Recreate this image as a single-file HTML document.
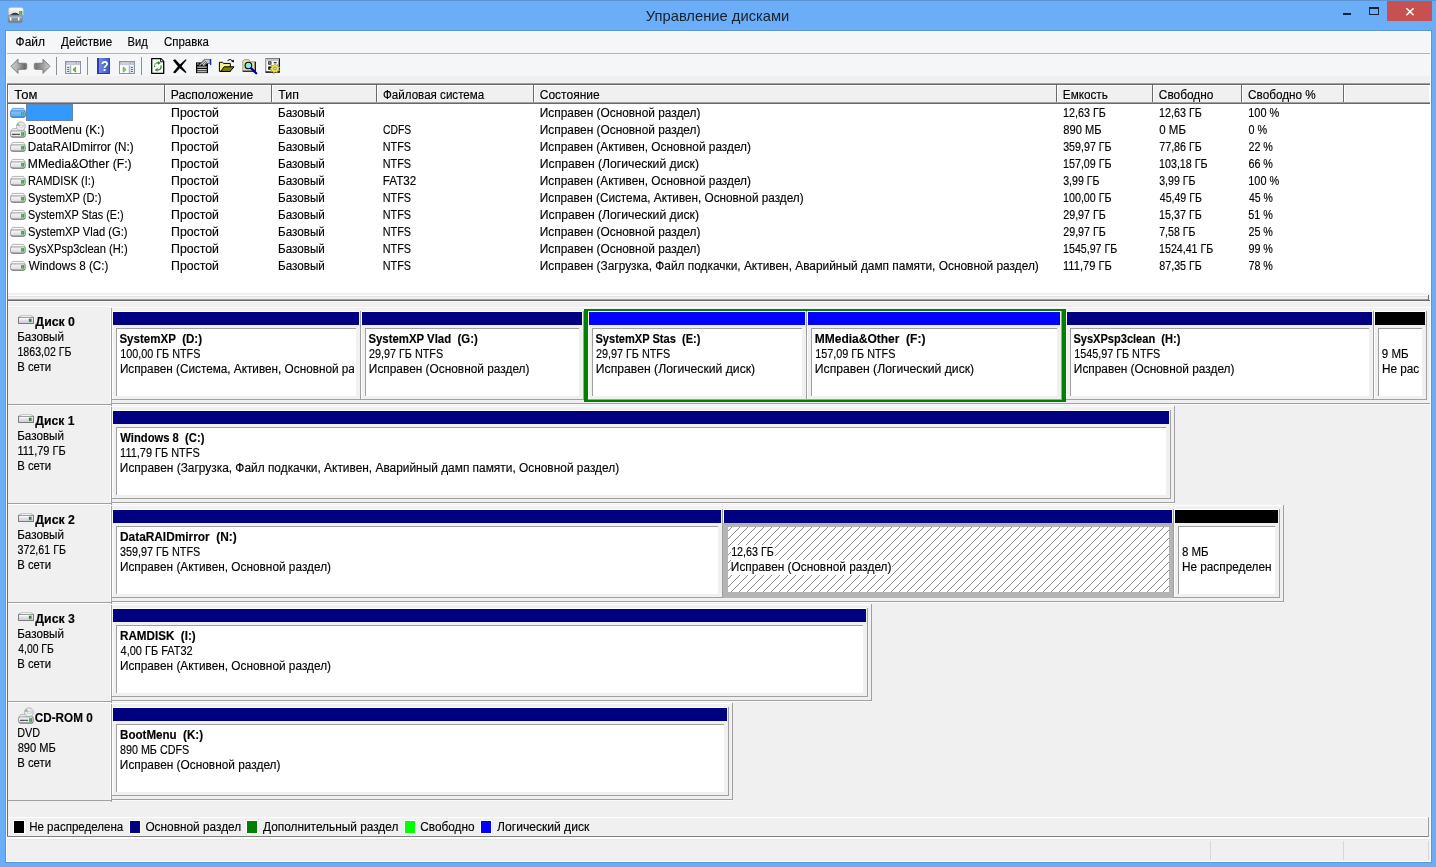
<!DOCTYPE html>
<html><head><meta charset="utf-8"><title>Управление дисками</title>
<style>
html,body{margin:0;padding:0;}
body{width:1436px;height:867px;position:relative;overflow:hidden;background:#6BADF6;font-family:"Liberation Sans",sans-serif;}
#w{will-change:transform;position:absolute;left:0;top:0;width:1436px;height:867px;overflow:hidden;}
#w div,#w svg,#w span.t{position:absolute;}
#w div.c{overflow:hidden;}
span.t{-webkit-text-stroke:0.14px #000;white-space:pre;transform-origin:0 0;display:block;}
</style></head><body><div id="w">
<div style="left:0px;top:0px;width:1436px;height:867px;background:#6BADF6;"></div>
<div style="left:0px;top:0px;width:1436px;height:1px;background:#5A93D2;"></div>
<div style="left:6px;top:30px;width:1425px;height:1px;background:#5E9BE0;"></div>
<div style="left:6px;top:31px;width:1425px;height:831px;background:#F0F0F0;"></div>
<div style="left:1387px;top:1px;width:45px;height:20px;background:#C75050;"></div>
<svg style="left:1405px;top:7px" width="10" height="9" viewBox="0 0 10 9"><path d="M1.4 1.2 L8.6 8.2 M8.6 1.2 L1.4 8.2" stroke="#fff" stroke-width="1.6" fill="none"/></svg>
<div style="left:1369px;top:7px;width:8px;height:5px;border:1px solid #10233f;border-top-width:2px"></div>
<div style="left:1343px;top:13px;width:8px;height:2px;background:#10233f;"></div>
<svg style="left:7px;top:6px" width="18" height="18" viewBox="7 6 18 18">
<defs><linearGradient id="ti1" x1="0" y1="0" x2="0" y2="1"><stop offset="0" stop-color="#ffffff"/><stop offset="1" stop-color="#d4d6da"/></linearGradient>
<linearGradient id="ti2" x1="0" y1="0" x2="0" y2="1"><stop offset="0" stop-color="#a9b6bf"/><stop offset="0.5" stop-color="#8796a1"/><stop offset="1" stop-color="#6f7f8b"/></linearGradient></defs>
<path d="M10 7.4 L21.6 7.4 L23.4 9 L23.4 15 L8.4 15 L8.4 9 Z" fill="url(#ti1)" stroke="#b4b8be" stroke-width="0.7"/>
<rect x="19.3" y="11" width="2.9" height="3.6" fill="#2f9a2f"/><rect x="20.5" y="11" width="0.7" height="3.6" fill="#8fd98f"/>
<path d="M10.8 15.2 Q15 11.2 19.2 15.2 Z" fill="#4a4a4a" stroke="#1c1c1c" stroke-width="0.9"/>
<rect x="8.3" y="15.2" width="13.8" height="7.4" rx="0.8" fill="url(#ti2)" stroke="#74838e" stroke-width="0.6"/>
<rect x="8.6" y="17" width="13.2" height="1" fill="#b9c4cb" opacity="0.7"/>
<rect x="9.9" y="17.6" width="1.5" height="2.9" fill="#fff"/><rect x="17.9" y="17.6" width="1.5" height="2.9" fill="#fff"/>
</svg>
<div style="left:6px;top:31px;width:1425px;height:22px;background:#F5F6F7;"></div>
<div style="left:6px;top:53px;width:1425px;height:1px;background:#B4B4B4;"></div>
<div style="left:6px;top:54px;width:1425px;height:22px;background:#F5F6F7;"></div>

<svg style="left:6px;top:54px" width="290" height="24" viewBox="6 54 290 24">
<defs>
<linearGradient id="gaL" x1="0" y1="0" x2="1" y2="0"><stop offset="0" stop-color="#cdcdcd"/><stop offset="0.4" stop-color="#b4b4b4"/><stop offset="0.88" stop-color="#686868"/><stop offset="1" stop-color="#8a8a8a"/></linearGradient>
<linearGradient id="gaR" x1="1" y1="0" x2="0" y2="0"><stop offset="0" stop-color="#cdcdcd"/><stop offset="0.4" stop-color="#a6a6a6"/><stop offset="0.88" stop-color="#747474"/><stop offset="1" stop-color="#8a8a8a"/></linearGradient>
<linearGradient id="gh" x1="0" y1="0" x2="1" y2="0"><stop offset="0" stop-color="#2a3f9f"/><stop offset="0.18" stop-color="#2a3f9f"/><stop offset="0.19" stop-color="#6f89e4"/><stop offset="0.55" stop-color="#5572d6"/><stop offset="1" stop-color="#3853b8"/></linearGradient>
</defs>
<path d="M11 66.3 L18 59.2 L18 63.3 L25.6 63.3 Q26.7 63.3 26.7 64.4 L26.7 68.2 Q26.7 69.3 25.6 69.3 L18 69.3 L18 73.4 Z" fill="url(#gaL)" stroke="#7c7c7c" stroke-width="1" stroke-linejoin="round"/>
<path d="M50 66.3 L43 59.2 L43 63.3 L35.4 63.3 Q34.3 63.3 34.3 64.4 L34.3 68.2 Q34.3 69.3 35.4 69.3 L43 69.3 L43 73.4 Z" fill="url(#gaR)" stroke="#7c7c7c" stroke-width="1" stroke-linejoin="round"/>
<rect x="56" y="57" width="1" height="18" fill="#8e9096"/>
<rect x="87" y="57" width="1" height="18" fill="#8e9096"/>
<rect x="141" y="57" width="1" height="18" fill="#8e9096"/>
<!-- console tree icon -->
<g>
<rect x="65.5" y="61.5" width="15" height="12" fill="#ffffff" stroke="#8a93a3"/>
<rect x="66" y="62" width="14" height="3" fill="#aab2c0"/>
<rect x="66.6" y="62.6" width="9" height="0.9" fill="#eef1f6"/><rect x="77" y="62.5" width="1" height="1.1" fill="#eef1f6"/><rect x="78.7" y="62.5" width="1" height="1.1" fill="#eef1f6"/>
<rect x="66" y="64.6" width="14" height="0.9" fill="#e9edf3"/>
<rect x="66" y="65.5" width="4.5" height="7.5" fill="#e4e8ef"/>
<rect x="70.2" y="65.5" width="1" height="7.5" fill="#97a0b0"/>
<rect x="67.2" y="67" width="2" height="1" fill="#5f6978"/><rect x="67.2" y="69" width="2" height="1" fill="#5f6978"/><rect x="67.2" y="71" width="2" height="1" fill="#5f6978"/>
<path d="M75.7 67 L72.8 69.6 L75.7 72.2 Z" fill="#6fc24a" stroke="#3f9a24" stroke-width="0.7"/>
</g>
<!-- help -->
<rect x="97" y="58" width="13" height="16" fill="url(#gh)"/>
<rect x="97" y="73" width="13" height="1" fill="#27399a"/><rect x="109.2" y="58" width="0.8" height="16" fill="#2e45a8"/>
<text x="104.9" y="71.4" font-family="Liberation Sans, sans-serif" font-weight="bold" font-size="14.5" fill="#fff" text-anchor="middle" transform="translate(104.9 0) scale(0.86 1) translate(-104.9 0)">?</text>
<!-- action pane icon -->
<g>
<rect x="119.5" y="61.5" width="15" height="12" fill="#ffffff" stroke="#8a93a3"/>
<rect x="120" y="62" width="14" height="3" fill="#aab2c0"/>
<rect x="120.6" y="62.6" width="9" height="0.9" fill="#eef1f6"/><rect x="131" y="62.5" width="1" height="1.1" fill="#eef1f6"/><rect x="132.7" y="62.5" width="1" height="1.1" fill="#eef1f6"/>
<rect x="120" y="64.6" width="14" height="0.9" fill="#e9edf3"/>
<rect x="129.5" y="65.5" width="4.5" height="7.5" fill="#e4e8ef"/>
<rect x="128.8" y="65.5" width="1" height="7.5" fill="#97a0b0"/>
<rect x="130.9" y="67" width="2" height="1" fill="#5f6978"/><rect x="130.9" y="69" width="2" height="1" fill="#5f6978"/><rect x="130.9" y="71" width="2" height="1" fill="#5f6978"/>
<path d="M123.2 67 L126.1 69.6 L123.2 72.2 Z" fill="#9ad67c" stroke="#4aa52c" stroke-width="0.8"/>
</g>
<!-- refresh doc -->
<path d="M151.7 58.7 L161 58.7 L163.7 61.4 L163.7 73.3 L151.7 73.3 Z" fill="#fff" stroke="#000" stroke-width="1.3" stroke-linejoin="round"/>
<path d="M160.6 59 L160.6 61.8 L163.4 61.8" fill="#fff" stroke="#000" stroke-width="0.9"/>
<path d="M154.6 67.2 Q153.9 62.9 158 62.9" fill="none" stroke="#1a8a1a" stroke-width="1.2" stroke-dasharray="1.6 0.8"/>
<path d="M158 61 L160.8 62.9 L158 64.8 Z" fill="#1a8a1a"/>
<path d="M161 65.5 Q161.6 69.9 157.6 69.9" fill="none" stroke="#1a8a1a" stroke-width="1.2"/>
<path d="M157.6 68 L154.8 69.9 L157.6 71.8 Z" fill="#1a8a1a"/>
<!-- X -->
<path d="M173 72.6 L175.3 73.2 L180.8 67 L186.6 59.9 L185.7 59.2 L178.2 66 Z" fill="#000"/>
<path d="M172.9 60.3 L175.2 59.3 L181 65.6 L186.5 72.2 L185.5 73 L178.6 67.2 Z" fill="#000"/>
<!-- properties -->
<rect x="196" y="62.4" width="12" height="10.7" fill="#000"/>
<rect x="197.2" y="63.4" width="1.3" height="1.2" fill="#fff"/>
<rect x="197.2" y="66.5" width="9.6" height="1.3" fill="#c8c8c8"/><rect x="197.2" y="69.2" width="9.6" height="1.1" fill="#fff"/><rect x="197.2" y="71.3" width="9.6" height="1" fill="#fff"/>
<path d="M198.8 65.2 L204.2 59.4 L210 59.4 L210 63.6 L206.6 63.6 L204 66.4 L201.5 64.2 L200 66 Z" fill="#c9c9c9" stroke="#3a3a3a" stroke-width="0.6"/>
<path d="M200.6 64 L204.6 60 M202 65 L206 61 M203.6 65.6 L207 62" stroke="#333" stroke-width="0.6"/>
<rect x="210" y="59" width="1.3" height="6" fill="#1a2fb0"/>
<!-- folder -->
<path d="M219.4 62.3 L222.6 62.3 L223.4 63.4 L230.3 63.4 L230.3 71.4 L219.4 71.4 Z" fill="#f1f08a" stroke="#000" stroke-width="1"/>
<path d="M220.6 71.4 L224.2 66.8 L234 66.8 L230.2 71.4 Z" fill="#808000" stroke="#000" stroke-width="1" stroke-linejoin="round"/>
<path d="M227.5 60.6 Q230.3 57.9 232.8 61.2" fill="none" stroke="#000" stroke-width="1"/><path d="M231.2 61.6 L233.9 62.6 L233.7 59.6 Z" fill="#000"/>
<!-- search -->
<path d="M242.8 71 L242.8 61 L244.2 59.6 L249 59.6 L250.2 61.8 L255.2 61.8 L255.2 71 Z" fill="#e9dea0" stroke="#a0a0a0" stroke-width="1"/>
<path d="M255.3 61.8 L255.3 71.2 L242.6 71.2" fill="none" stroke="#000" stroke-width="1.1"/>
<circle cx="248.4" cy="65.5" r="3.3" fill="#84e9ea" stroke="#000" stroke-width="1.1"/>
<path d="M251.2 68.4 L256.2 73.3" stroke="#00008c" stroke-width="2.2" stroke-linecap="round"/>
<!-- settings -->
<rect x="265.8" y="58.5" width="13.4" height="13.4" fill="#fff" stroke="#808080"/>
<path d="M279.3 58.5 L279.3 72.1 L265.5 72.1" fill="none" stroke="#000" stroke-width="1.1"/>
<rect x="266.3" y="59" width="12.4" height="2.1" fill="#c4c4c4"/>
<rect x="268.2" y="61.4" width="3.2" height="3.2" fill="#000"/><path d="M268.9 62 L270.7 64 M270.7 62 L268.9 64" stroke="#fff" stroke-width="0.5"/><rect x="273.8" y="62.2" width="2.8" height="1" fill="#000"/>
<rect x="268.2" y="66.5" width="3.2" height="3.2" fill="#000"/>
<path d="M274.9 63.6 L276 65.4 L278 64.5 L277.8 66.7 L280 67.2 L278.5 68.8 L279.8 70.6 L277.6 70.7 L277.3 72.9 L275.4 71.8 L273.9 73.6 L273 71.5 L270.8 72 L271.5 69.9 L269.6 68.6 L271.6 67.6 L271 65.4 L273.2 65.7 Z" fill="#f0ea5a" stroke="#7a7420" stroke-width="0.55"/>
<circle cx="274.9" cy="68.4" r="1.5" fill="#d8d8d8" stroke="#6f6a10" stroke-width="0.6"/>
</svg>
<div style="left:7px;top:83px;width:1px;height:754px;background:#696969;"></div>
<div style="left:7px;top:83px;width:1423px;height:1px;background:#A0A0A0;"></div>
<div style="left:7px;top:84px;width:1423px;height:1px;background:#696969;"></div>
<div style="left:8px;top:85px;width:1422px;height:209px;background:#fff;"></div>
<div style="left:8px;top:85px;width:1421px;height:18px;background:#F0F0F0;"></div>
<div style="left:8px;top:85px;width:1422px;height:1px;background:#FFFFFF;"></div>
<div style="left:8px;top:85px;width:1px;height:17px;background:#FFFFFF;"></div>
<div style="left:164px;top:85px;width:1px;height:18px;background:#696969;"></div>
<div style="left:165px;top:85px;width:1px;height:17px;background:#FFFFFF;"></div>
<div style="left:271px;top:85px;width:1px;height:18px;background:#696969;"></div>
<div style="left:272px;top:85px;width:1px;height:17px;background:#FFFFFF;"></div>
<div style="left:376px;top:85px;width:1px;height:18px;background:#696969;"></div>
<div style="left:377px;top:85px;width:1px;height:17px;background:#FFFFFF;"></div>
<div style="left:533px;top:85px;width:1px;height:18px;background:#696969;"></div>
<div style="left:534px;top:85px;width:1px;height:17px;background:#FFFFFF;"></div>
<div style="left:1056px;top:85px;width:1px;height:18px;background:#696969;"></div>
<div style="left:1057px;top:85px;width:1px;height:17px;background:#FFFFFF;"></div>
<div style="left:1152px;top:85px;width:1px;height:18px;background:#696969;"></div>
<div style="left:1153px;top:85px;width:1px;height:17px;background:#FFFFFF;"></div>
<div style="left:1241px;top:85px;width:1px;height:18px;background:#696969;"></div>
<div style="left:1242px;top:85px;width:1px;height:17px;background:#FFFFFF;"></div>
<div style="left:1343px;top:85px;width:1px;height:18px;background:#696969;"></div>
<div style="left:1344px;top:85px;width:1px;height:17px;background:#FFFFFF;"></div>
<div style="left:8px;top:102px;width:1422px;height:1px;background:#A0A0A0;"></div>
<div style="left:8px;top:103px;width:1422px;height:1px;background:#696969;"></div>
<div style="left:26px;top:104px;width:47px;height:17px;background:#3399FF;outline:1px dotted #5f80ad;outline-offset:-1px;"></div>
<svg style="left:9px;top:107px" width="18" height="12" viewBox="-1 -1 18 12"><defs><linearGradient id="dg39" x1="0" y1="0" x2="0" y2="1"><stop offset="0" stop-color="#8cc3fb"/><stop offset="1" stop-color="#5ea6f3"/></linearGradient></defs><path d="M2.6 0.4 L13.4 0.4 L15.4 3.4 L0.6 3.4 Z" fill="#a6d2fd" stroke="#3c84d6" stroke-width="0.7" stroke-linejoin="round"/><rect x="0.45" y="2.9" width="15.1" height="6.3" rx="1.9" fill="url(#dg39)" stroke="#3c84d6" stroke-width="0.9"/><path d="M1.2 8 Q1.6 9.2 3 9.2 L13 9.2 Q14.4 9.2 14.8 8" fill="none" stroke="#2f74c4" stroke-width="0.9"/><rect x="11.2" y="4" width="3.2" height="3.6" fill="#3d9fa0"/><rect x="12.5" y="4" width="0.7" height="3.6" fill="#7fd0c0"/></svg>
<svg style="left:9px;top:121px" width="18" height="17" viewBox="-1 0 18 17"><defs><linearGradient id="dg40" x1="0" y1="0" x2="0" y2="1"><stop offset="0" stop-color="#f6f6f8"/><stop offset="1" stop-color="#dad8e1"/></linearGradient></defs><path d="M2.6 7.7 L13.4 7.7 L15.4 10.4 L0.6 10.4 Z" fill="#fafafa" stroke="#949494" stroke-width="0.7" stroke-linejoin="round"/><circle cx="10.9" cy="5.4" r="4.5" fill="#eceaf1" stroke="#a9a7b2" stroke-width="0.8"/><path d="M10.9 5.4 L6.5 4.4 A4.5 4.5 0 0 1 8.3 1.8 Z" fill="#7fd069"/><path d="M10.9 5.4 L14.6 2.9 A4.5 4.5 0 0 1 15.3 6.4 Z" fill="#d9cfe6"/><circle cx="10.9" cy="5.4" r="1.3" fill="#fff" stroke="#b4b2bd" stroke-width="0.6"/><rect x="0.45" y="9.9" width="15.1" height="6.2" rx="1.9" fill="url(#dg40)" stroke="#949494" stroke-width="0.9"/><path d="M1.2 15 Q1.6 16.1 3 16.1 L13 16.1 Q14.4 16.1 14.8 15" fill="none" stroke="#727272" stroke-width="0.9"/><rect x="1.9" y="12.8" width="8" height="1.1" fill="#444"/><rect x="6.6" y="13.9" width="1.3" height="0.8" fill="#fff"/><rect x="11.2" y="11.2" width="3.2" height="3.5" fill="#2f962f"/><rect x="12.5" y="11.2" width="0.7" height="3.5" fill="#86d886"/></svg>
<svg style="left:9px;top:141px" width="18" height="12" viewBox="-1 -1 18 12"><defs><linearGradient id="dg41" x1="0" y1="0" x2="0" y2="1"><stop offset="0" stop-color="#f6f6f8"/><stop offset="1" stop-color="#dad8e1"/></linearGradient></defs><path d="M2.6 0.4 L13.4 0.4 L15.4 3.4 L0.6 3.4 Z" fill="#fafafa" stroke="#949494" stroke-width="0.7" stroke-linejoin="round"/><rect x="0.45" y="2.9" width="15.1" height="6.3" rx="1.9" fill="url(#dg41)" stroke="#949494" stroke-width="0.9"/><path d="M1.2 8 Q1.6 9.2 3 9.2 L13 9.2 Q14.4 9.2 14.8 8" fill="none" stroke="#727272" stroke-width="0.9"/><rect x="11.2" y="4" width="3.2" height="3.6" fill="#2f962f"/><rect x="12.5" y="4" width="0.7" height="3.6" fill="#86d886"/></svg>
<svg style="left:9px;top:158px" width="18" height="12" viewBox="-1 -1 18 12"><defs><linearGradient id="dg42" x1="0" y1="0" x2="0" y2="1"><stop offset="0" stop-color="#f6f6f8"/><stop offset="1" stop-color="#dad8e1"/></linearGradient></defs><path d="M2.6 0.4 L13.4 0.4 L15.4 3.4 L0.6 3.4 Z" fill="#fafafa" stroke="#949494" stroke-width="0.7" stroke-linejoin="round"/><rect x="0.45" y="2.9" width="15.1" height="6.3" rx="1.9" fill="url(#dg42)" stroke="#949494" stroke-width="0.9"/><path d="M1.2 8 Q1.6 9.2 3 9.2 L13 9.2 Q14.4 9.2 14.8 8" fill="none" stroke="#727272" stroke-width="0.9"/><rect x="11.2" y="4" width="3.2" height="3.6" fill="#2f962f"/><rect x="12.5" y="4" width="0.7" height="3.6" fill="#86d886"/></svg>
<svg style="left:9px;top:175px" width="18" height="12" viewBox="-1 -1 18 12"><defs><linearGradient id="dg43" x1="0" y1="0" x2="0" y2="1"><stop offset="0" stop-color="#f6f6f8"/><stop offset="1" stop-color="#dad8e1"/></linearGradient></defs><path d="M2.6 0.4 L13.4 0.4 L15.4 3.4 L0.6 3.4 Z" fill="#fafafa" stroke="#949494" stroke-width="0.7" stroke-linejoin="round"/><rect x="0.45" y="2.9" width="15.1" height="6.3" rx="1.9" fill="url(#dg43)" stroke="#949494" stroke-width="0.9"/><path d="M1.2 8 Q1.6 9.2 3 9.2 L13 9.2 Q14.4 9.2 14.8 8" fill="none" stroke="#727272" stroke-width="0.9"/><rect x="11.2" y="4" width="3.2" height="3.6" fill="#2f962f"/><rect x="12.5" y="4" width="0.7" height="3.6" fill="#86d886"/></svg>
<svg style="left:9px;top:192px" width="18" height="12" viewBox="-1 -1 18 12"><defs><linearGradient id="dg44" x1="0" y1="0" x2="0" y2="1"><stop offset="0" stop-color="#f6f6f8"/><stop offset="1" stop-color="#dad8e1"/></linearGradient></defs><path d="M2.6 0.4 L13.4 0.4 L15.4 3.4 L0.6 3.4 Z" fill="#fafafa" stroke="#949494" stroke-width="0.7" stroke-linejoin="round"/><rect x="0.45" y="2.9" width="15.1" height="6.3" rx="1.9" fill="url(#dg44)" stroke="#949494" stroke-width="0.9"/><path d="M1.2 8 Q1.6 9.2 3 9.2 L13 9.2 Q14.4 9.2 14.8 8" fill="none" stroke="#727272" stroke-width="0.9"/><rect x="11.2" y="4" width="3.2" height="3.6" fill="#2f962f"/><rect x="12.5" y="4" width="0.7" height="3.6" fill="#86d886"/></svg>
<svg style="left:9px;top:209px" width="18" height="12" viewBox="-1 -1 18 12"><defs><linearGradient id="dg45" x1="0" y1="0" x2="0" y2="1"><stop offset="0" stop-color="#f6f6f8"/><stop offset="1" stop-color="#dad8e1"/></linearGradient></defs><path d="M2.6 0.4 L13.4 0.4 L15.4 3.4 L0.6 3.4 Z" fill="#fafafa" stroke="#949494" stroke-width="0.7" stroke-linejoin="round"/><rect x="0.45" y="2.9" width="15.1" height="6.3" rx="1.9" fill="url(#dg45)" stroke="#949494" stroke-width="0.9"/><path d="M1.2 8 Q1.6 9.2 3 9.2 L13 9.2 Q14.4 9.2 14.8 8" fill="none" stroke="#727272" stroke-width="0.9"/><rect x="11.2" y="4" width="3.2" height="3.6" fill="#2f962f"/><rect x="12.5" y="4" width="0.7" height="3.6" fill="#86d886"/></svg>
<svg style="left:9px;top:226px" width="18" height="12" viewBox="-1 -1 18 12"><defs><linearGradient id="dg46" x1="0" y1="0" x2="0" y2="1"><stop offset="0" stop-color="#f6f6f8"/><stop offset="1" stop-color="#dad8e1"/></linearGradient></defs><path d="M2.6 0.4 L13.4 0.4 L15.4 3.4 L0.6 3.4 Z" fill="#fafafa" stroke="#949494" stroke-width="0.7" stroke-linejoin="round"/><rect x="0.45" y="2.9" width="15.1" height="6.3" rx="1.9" fill="url(#dg46)" stroke="#949494" stroke-width="0.9"/><path d="M1.2 8 Q1.6 9.2 3 9.2 L13 9.2 Q14.4 9.2 14.8 8" fill="none" stroke="#727272" stroke-width="0.9"/><rect x="11.2" y="4" width="3.2" height="3.6" fill="#2f962f"/><rect x="12.5" y="4" width="0.7" height="3.6" fill="#86d886"/></svg>
<svg style="left:9px;top:243px" width="18" height="12" viewBox="-1 -1 18 12"><defs><linearGradient id="dg47" x1="0" y1="0" x2="0" y2="1"><stop offset="0" stop-color="#f6f6f8"/><stop offset="1" stop-color="#dad8e1"/></linearGradient></defs><path d="M2.6 0.4 L13.4 0.4 L15.4 3.4 L0.6 3.4 Z" fill="#fafafa" stroke="#949494" stroke-width="0.7" stroke-linejoin="round"/><rect x="0.45" y="2.9" width="15.1" height="6.3" rx="1.9" fill="url(#dg47)" stroke="#949494" stroke-width="0.9"/><path d="M1.2 8 Q1.6 9.2 3 9.2 L13 9.2 Q14.4 9.2 14.8 8" fill="none" stroke="#727272" stroke-width="0.9"/><rect x="11.2" y="4" width="3.2" height="3.6" fill="#2f962f"/><rect x="12.5" y="4" width="0.7" height="3.6" fill="#86d886"/></svg>
<svg style="left:9px;top:260px" width="18" height="12" viewBox="-1 -1 18 12"><defs><linearGradient id="dg48" x1="0" y1="0" x2="0" y2="1"><stop offset="0" stop-color="#f6f6f8"/><stop offset="1" stop-color="#dad8e1"/></linearGradient></defs><path d="M2.6 0.4 L13.4 0.4 L15.4 3.4 L0.6 3.4 Z" fill="#fafafa" stroke="#949494" stroke-width="0.7" stroke-linejoin="round"/><rect x="0.45" y="2.9" width="15.1" height="6.3" rx="1.9" fill="url(#dg48)" stroke="#949494" stroke-width="0.9"/><path d="M1.2 8 Q1.6 9.2 3 9.2 L13 9.2 Q14.4 9.2 14.8 8" fill="none" stroke="#727272" stroke-width="0.9"/><rect x="11.2" y="4" width="3.2" height="3.6" fill="#2f962f"/><rect x="12.5" y="4" width="0.7" height="3.6" fill="#86d886"/></svg>
<div style="left:8px;top:293px;width:1422px;height:6px;background:#F0F0F0;"></div>
<div style="left:8px;top:295px;width:1421px;height:1px;background:#FFFFFF;"></div>
<div style="left:8px;top:296px;width:1421px;height:1px;background:#E3E3E3;"></div>
<div style="left:8px;top:299px;width:1421px;height:1px;background:#A0A0A0;"></div>
<div style="left:8px;top:300px;width:1422px;height:1px;background:#696969;"></div>
<div style="left:1428px;top:295px;width:1px;height:6px;background:#696969;"></div>
<div style="left:8px;top:301px;width:1422px;height:1px;background:#F8F8F8;"></div>
<div style="left:8px;top:306px;width:103px;height:1px;background:#FFFFFF;"></div>
<div style="left:112px;top:307px;width:1318px;height:1px;background:#FFFFFF;"></div>
<div style="left:110px;top:306px;width:1px;height:97px;background:#FFFFFF;"></div>
<div style="left:111px;top:308px;width:1px;height:98px;background:#A0A0A0;"></div>
<div style="left:112px;top:399px;width:1315px;height:1px;background:#A0A0A0;"></div>
<div style="left:8px;top:404px;width:103px;height:1px;background:#A0A0A0;"></div>
<div style="left:111px;top:403px;width:1319px;height:1px;background:#A0A0A0;"></div>
<div style="left:112px;top:404px;width:1318px;height:1px;background:#FAFAFA;"></div>
<svg style="left:18px;top:315px" width="17" height="10" viewBox="0 0 17 10"><defs><linearGradient id="pg64" x1="0" y1="0" x2="0" y2="1"><stop offset="0" stop-color="#f6f5fa"/><stop offset="1" stop-color="#cdc8db"/></linearGradient></defs><path d="M3.4 0.35 L12.8 0.35 L15.4 2.2 L0.5 2.2 Z" fill="#f3f3f3" stroke="#a6a6a6" stroke-width="0.7"/><rect x="4" y="0.9" width="8.6" height="0.6" fill="#fff"/><rect x="0.55" y="2.55" width="15" height="5.9" fill="url(#pg64)" stroke="#707070" stroke-width="0.9"/><rect x="1" y="2.1" width="14.1" height="0.9" fill="#a2a2a2"/><rect x="2.4" y="3.3" width="8.2" height="0.8" fill="#fff"/><rect x="10.9" y="3.8" width="2.9" height="3.1" fill="#2f6f2f"/><rect x="11.9" y="3.8" width="0.5" height="3.1" fill="#62a853"/><rect x="13.4" y="3.8" width="0.6" height="3.3" fill="#9ad08a"/><rect x="10.9" y="6.8" width="3" height="0.5" fill="#9ad08a"/></svg>
<div style="left:112px;top:311px;width:1px;height:88px;background:#FFFFFF;"></div>
<div style="left:113px;top:311px;width:246px;height:1px;background:#FFFFFF;"></div>
<div style="left:113px;top:312px;width:246px;height:13px;background:#000080;"></div>
<div style="left:116px;top:328px;width:240px;height:68px;background:#fff;border-left:1px solid #A0A0A0;border-top:1px solid #A0A0A0;box-sizing:border-box;"></div>
<div style="left:360px;top:311px;width:1px;height:89px;background:#A0A0A0;"></div>
<div style="left:360px;top:311px;width:1px;height:89px;background:#A0A0A0;"></div>
<div style="left:361px;top:311px;width:1px;height:88px;background:#FFFFFF;"></div>
<div style="left:362px;top:311px;width:220px;height:1px;background:#FFFFFF;"></div>
<div style="left:362px;top:312px;width:220px;height:13px;background:#000080;"></div>
<div style="left:365px;top:328px;width:214px;height:68px;background:#fff;border-left:1px solid #A0A0A0;border-top:1px solid #A0A0A0;box-sizing:border-box;"></div>
<div style="left:583px;top:311px;width:1px;height:89px;background:#A0A0A0;"></div>
<div style="left:587px;top:311px;width:1px;height:89px;background:#A0A0A0;"></div>
<div style="left:588px;top:311px;width:1px;height:88px;background:#FFFFFF;"></div>
<div style="left:589px;top:311px;width:216px;height:1px;background:#FFFFFF;"></div>
<div style="left:589px;top:312px;width:216px;height:13px;background:#0000FF;"></div>
<div style="left:592px;top:328px;width:210px;height:68px;background:#fff;border-left:1px solid #A0A0A0;border-top:1px solid #A0A0A0;box-sizing:border-box;"></div>
<div style="left:806px;top:311px;width:1px;height:89px;background:#A0A0A0;"></div>
<div style="left:806px;top:311px;width:1px;height:89px;background:#A0A0A0;"></div>
<div style="left:807px;top:311px;width:1px;height:88px;background:#FFFFFF;"></div>
<div style="left:808px;top:311px;width:252px;height:1px;background:#FFFFFF;"></div>
<div style="left:808px;top:312px;width:252px;height:13px;background:#0000FF;"></div>
<div style="left:811px;top:328px;width:246px;height:68px;background:#fff;border-left:1px solid #A0A0A0;border-top:1px solid #A0A0A0;box-sizing:border-box;"></div>
<div style="left:1061px;top:311px;width:1px;height:89px;background:#A0A0A0;"></div>
<div style="left:1065px;top:311px;width:1px;height:89px;background:#A0A0A0;"></div>
<div style="left:1066px;top:311px;width:1px;height:88px;background:#FFFFFF;"></div>
<div style="left:1067px;top:311px;width:305px;height:1px;background:#FFFFFF;"></div>
<div style="left:1067px;top:312px;width:305px;height:13px;background:#000080;"></div>
<div style="left:1070px;top:328px;width:299px;height:68px;background:#fff;border-left:1px solid #A0A0A0;border-top:1px solid #A0A0A0;box-sizing:border-box;"></div>
<div style="left:1373px;top:311px;width:1px;height:89px;background:#A0A0A0;"></div>
<div style="left:1373px;top:311px;width:1px;height:89px;background:#A0A0A0;"></div>
<div style="left:1374px;top:311px;width:1px;height:88px;background:#FFFFFF;"></div>
<div style="left:1375px;top:311px;width:50px;height:1px;background:#FFFFFF;"></div>
<div style="left:1375px;top:312px;width:50px;height:13px;background:#000000;"></div>
<div style="left:1378px;top:328px;width:44px;height:68px;background:#fff;border-left:1px solid #A0A0A0;border-top:1px solid #A0A0A0;box-sizing:border-box;"></div>
<div style="left:1426px;top:311px;width:1px;height:89px;background:#A0A0A0;"></div>
<div style="left:8px;top:405px;width:103px;height:1px;background:#FFFFFF;"></div>
<div style="left:112px;top:406px;width:1063px;height:1px;background:#FFFFFF;"></div>
<div style="left:110px;top:405px;width:1px;height:97px;background:#FFFFFF;"></div>
<div style="left:111px;top:407px;width:1px;height:98px;background:#A0A0A0;"></div>
<div style="left:112px;top:498px;width:1059px;height:1px;background:#A0A0A0;"></div>
<div style="left:8px;top:503px;width:103px;height:1px;background:#A0A0A0;"></div>
<div style="left:111px;top:502px;width:1064px;height:1px;background:#A0A0A0;"></div>
<div style="left:112px;top:503px;width:1063px;height:1px;background:#FAFAFA;"></div>
<div style="left:1174px;top:406px;width:1px;height:97px;background:#A0A0A0;"></div>
<svg style="left:18px;top:414px" width="17" height="10" viewBox="0 0 17 10"><defs><linearGradient id="pg109" x1="0" y1="0" x2="0" y2="1"><stop offset="0" stop-color="#f6f5fa"/><stop offset="1" stop-color="#cdc8db"/></linearGradient></defs><path d="M3.4 0.35 L12.8 0.35 L15.4 2.2 L0.5 2.2 Z" fill="#f3f3f3" stroke="#a6a6a6" stroke-width="0.7"/><rect x="4" y="0.9" width="8.6" height="0.6" fill="#fff"/><rect x="0.55" y="2.55" width="15" height="5.9" fill="url(#pg109)" stroke="#707070" stroke-width="0.9"/><rect x="1" y="2.1" width="14.1" height="0.9" fill="#a2a2a2"/><rect x="2.4" y="3.3" width="8.2" height="0.8" fill="#fff"/><rect x="10.9" y="3.8" width="2.9" height="3.1" fill="#2f6f2f"/><rect x="11.9" y="3.8" width="0.5" height="3.1" fill="#62a853"/><rect x="13.4" y="3.8" width="0.6" height="3.3" fill="#9ad08a"/><rect x="10.9" y="6.8" width="3" height="0.5" fill="#9ad08a"/></svg>
<div style="left:112px;top:410px;width:1px;height:88px;background:#FFFFFF;"></div>
<div style="left:113px;top:410px;width:1056px;height:1px;background:#FFFFFF;"></div>
<div style="left:113px;top:411px;width:1056px;height:13px;background:#000080;"></div>
<div style="left:116px;top:427px;width:1050px;height:68px;background:#fff;border-left:1px solid #A0A0A0;border-top:1px solid #A0A0A0;box-sizing:border-box;"></div>
<div style="left:1170px;top:410px;width:1px;height:89px;background:#A0A0A0;"></div>
<div style="left:8px;top:504px;width:103px;height:1px;background:#FFFFFF;"></div>
<div style="left:112px;top:505px;width:1172px;height:1px;background:#FFFFFF;"></div>
<div style="left:110px;top:504px;width:1px;height:97px;background:#FFFFFF;"></div>
<div style="left:111px;top:506px;width:1px;height:98px;background:#A0A0A0;"></div>
<div style="left:112px;top:597px;width:1168px;height:1px;background:#A0A0A0;"></div>
<div style="left:8px;top:602px;width:103px;height:1px;background:#A0A0A0;"></div>
<div style="left:111px;top:601px;width:1173px;height:1px;background:#A0A0A0;"></div>
<div style="left:112px;top:602px;width:1172px;height:1px;background:#FAFAFA;"></div>
<div style="left:1283px;top:505px;width:1px;height:97px;background:#A0A0A0;"></div>
<svg style="left:18px;top:513px" width="17" height="10" viewBox="0 0 17 10"><defs><linearGradient id="pg124" x1="0" y1="0" x2="0" y2="1"><stop offset="0" stop-color="#f6f5fa"/><stop offset="1" stop-color="#cdc8db"/></linearGradient></defs><path d="M3.4 0.35 L12.8 0.35 L15.4 2.2 L0.5 2.2 Z" fill="#f3f3f3" stroke="#a6a6a6" stroke-width="0.7"/><rect x="4" y="0.9" width="8.6" height="0.6" fill="#fff"/><rect x="0.55" y="2.55" width="15" height="5.9" fill="url(#pg124)" stroke="#707070" stroke-width="0.9"/><rect x="1" y="2.1" width="14.1" height="0.9" fill="#a2a2a2"/><rect x="2.4" y="3.3" width="8.2" height="0.8" fill="#fff"/><rect x="10.9" y="3.8" width="2.9" height="3.1" fill="#2f6f2f"/><rect x="11.9" y="3.8" width="0.5" height="3.1" fill="#62a853"/><rect x="13.4" y="3.8" width="0.6" height="3.3" fill="#9ad08a"/><rect x="10.9" y="6.8" width="3" height="0.5" fill="#9ad08a"/></svg>
<div style="left:112px;top:509px;width:1px;height:88px;background:#FFFFFF;"></div>
<div style="left:113px;top:509px;width:608px;height:1px;background:#FFFFFF;"></div>
<div style="left:113px;top:510px;width:608px;height:13px;background:#000080;"></div>
<div style="left:116px;top:526px;width:602px;height:68px;background:#fff;border-left:1px solid #A0A0A0;border-top:1px solid #A0A0A0;box-sizing:border-box;"></div>
<div style="left:722px;top:509px;width:1px;height:89px;background:#A0A0A0;"></div>
<div style="left:722px;top:509px;width:1px;height:89px;background:#A0A0A0;"></div>
<div style="left:723px;top:509px;width:1px;height:88px;background:#FFFFFF;"></div>
<div style="left:724px;top:509px;width:448px;height:1px;background:#FFFFFF;"></div>
<div style="left:724px;top:510px;width:448px;height:13px;background:#000080;"></div>
<div style="left:723px;top:523px;width:450px;height:75px;background:#B4B4B4;"></div>
<div class="c" style="left:728px;top:527px;width:441px;height:65px;background:#fff"><div style="left:-4px;top:0;width:461px;height:65px;background:repeating-linear-gradient(135deg,#fff 0,#fff 5.0px,#888 5.0px,#888 5.657px);"></div></div>
<div style="left:731px;top:545px;width:44px;height:15px;background:#fff;"></div>
<div style="left:731px;top:560px;width:161px;height:15px;background:#fff;"></div>
<div style="left:1173px;top:509px;width:1px;height:89px;background:#A0A0A0;"></div>
<div style="left:1173px;top:509px;width:1px;height:89px;background:#A0A0A0;"></div>
<div style="left:1174px;top:509px;width:1px;height:88px;background:#FFFFFF;"></div>
<div style="left:1175px;top:509px;width:103px;height:1px;background:#FFFFFF;"></div>
<div style="left:1175px;top:510px;width:103px;height:13px;background:#000000;"></div>
<div style="left:1178px;top:526px;width:97px;height:68px;background:#fff;border-left:1px solid #A0A0A0;border-top:1px solid #A0A0A0;box-sizing:border-box;"></div>
<div style="left:1279px;top:509px;width:1px;height:89px;background:#A0A0A0;"></div>
<div style="left:8px;top:603px;width:103px;height:1px;background:#FFFFFF;"></div>
<div style="left:112px;top:604px;width:760px;height:1px;background:#FFFFFF;"></div>
<div style="left:110px;top:603px;width:1px;height:97px;background:#FFFFFF;"></div>
<div style="left:111px;top:605px;width:1px;height:98px;background:#A0A0A0;"></div>
<div style="left:112px;top:696px;width:756px;height:1px;background:#A0A0A0;"></div>
<div style="left:8px;top:701px;width:103px;height:1px;background:#A0A0A0;"></div>
<div style="left:111px;top:700px;width:761px;height:1px;background:#A0A0A0;"></div>
<div style="left:112px;top:701px;width:760px;height:1px;background:#FAFAFA;"></div>
<div style="left:871px;top:604px;width:1px;height:97px;background:#A0A0A0;"></div>
<svg style="left:18px;top:612px" width="17" height="10" viewBox="0 0 17 10"><defs><linearGradient id="pg154" x1="0" y1="0" x2="0" y2="1"><stop offset="0" stop-color="#f6f5fa"/><stop offset="1" stop-color="#cdc8db"/></linearGradient></defs><path d="M3.4 0.35 L12.8 0.35 L15.4 2.2 L0.5 2.2 Z" fill="#f3f3f3" stroke="#a6a6a6" stroke-width="0.7"/><rect x="4" y="0.9" width="8.6" height="0.6" fill="#fff"/><rect x="0.55" y="2.55" width="15" height="5.9" fill="url(#pg154)" stroke="#707070" stroke-width="0.9"/><rect x="1" y="2.1" width="14.1" height="0.9" fill="#a2a2a2"/><rect x="2.4" y="3.3" width="8.2" height="0.8" fill="#fff"/><rect x="10.9" y="3.8" width="2.9" height="3.1" fill="#2f6f2f"/><rect x="11.9" y="3.8" width="0.5" height="3.1" fill="#62a853"/><rect x="13.4" y="3.8" width="0.6" height="3.3" fill="#9ad08a"/><rect x="10.9" y="6.8" width="3" height="0.5" fill="#9ad08a"/></svg>
<div style="left:112px;top:608px;width:1px;height:88px;background:#FFFFFF;"></div>
<div style="left:113px;top:608px;width:753px;height:1px;background:#FFFFFF;"></div>
<div style="left:113px;top:609px;width:753px;height:13px;background:#000080;"></div>
<div style="left:116px;top:625px;width:747px;height:68px;background:#fff;border-left:1px solid #A0A0A0;border-top:1px solid #A0A0A0;box-sizing:border-box;"></div>
<div style="left:867px;top:608px;width:1px;height:89px;background:#A0A0A0;"></div>
<div style="left:8px;top:702px;width:103px;height:1px;background:#FFFFFF;"></div>
<div style="left:112px;top:703px;width:621px;height:1px;background:#FFFFFF;"></div>
<div style="left:110px;top:702px;width:1px;height:97px;background:#FFFFFF;"></div>
<div style="left:111px;top:704px;width:1px;height:98px;background:#A0A0A0;"></div>
<div style="left:112px;top:795px;width:617px;height:1px;background:#A0A0A0;"></div>
<div style="left:8px;top:800px;width:103px;height:1px;background:#A0A0A0;"></div>
<div style="left:111px;top:799px;width:622px;height:1px;background:#A0A0A0;"></div>
<div style="left:112px;top:800px;width:621px;height:1px;background:#FAFAFA;"></div>
<div style="left:732px;top:703px;width:1px;height:97px;background:#A0A0A0;"></div>
<svg style="left:17px;top:707px" width="18" height="17" viewBox="-1 0 18 17"><defs><linearGradient id="dg169" x1="0" y1="0" x2="0" y2="1"><stop offset="0" stop-color="#f6f6f8"/><stop offset="1" stop-color="#dad8e1"/></linearGradient></defs><path d="M2.6 7.7 L13.4 7.7 L15.4 10.4 L0.6 10.4 Z" fill="#fafafa" stroke="#949494" stroke-width="0.7" stroke-linejoin="round"/><circle cx="10.9" cy="5.4" r="4.5" fill="#eceaf1" stroke="#a9a7b2" stroke-width="0.8"/><path d="M10.9 5.4 L6.5 4.4 A4.5 4.5 0 0 1 8.3 1.8 Z" fill="#7fd069"/><path d="M10.9 5.4 L14.6 2.9 A4.5 4.5 0 0 1 15.3 6.4 Z" fill="#d9cfe6"/><circle cx="10.9" cy="5.4" r="1.3" fill="#fff" stroke="#b4b2bd" stroke-width="0.6"/><rect x="0.45" y="9.9" width="15.1" height="6.2" rx="1.9" fill="url(#dg169)" stroke="#949494" stroke-width="0.9"/><path d="M1.2 15 Q1.6 16.1 3 16.1 L13 16.1 Q14.4 16.1 14.8 15" fill="none" stroke="#727272" stroke-width="0.9"/><rect x="1.9" y="12.8" width="8" height="1.1" fill="#444"/><rect x="6.6" y="13.9" width="1.3" height="0.8" fill="#fff"/><rect x="11.2" y="11.2" width="3.2" height="3.5" fill="#2f962f"/><rect x="12.5" y="11.2" width="0.7" height="3.5" fill="#86d886"/></svg>
<div style="left:112px;top:707px;width:1px;height:88px;background:#FFFFFF;"></div>
<div style="left:113px;top:707px;width:614px;height:1px;background:#FFFFFF;"></div>
<div style="left:113px;top:708px;width:614px;height:13px;background:#000080;"></div>
<div style="left:116px;top:724px;width:608px;height:68px;background:#fff;border-left:1px solid #A0A0A0;border-top:1px solid #A0A0A0;box-sizing:border-box;"></div>
<div style="left:728px;top:707px;width:1px;height:89px;background:#A0A0A0;"></div>
<div style="left:584px;top:309px;width:482px;height:2px;background:#008000;"></div>
<div style="left:584px;top:400px;width:482px;height:2px;background:#008000;"></div>
<div style="left:584px;top:309px;width:4px;height:93px;background:#008000;"></div>
<div style="left:1062px;top:309px;width:4px;height:93px;background:#008000;"></div>
<div style="left:8px;top:817px;width:1422px;height:1px;background:#FFFFFF;"></div>
<div style="left:13px;top:820px;width:12px;height:14px;background:#fff;"></div>
<div style="left:14px;top:821px;width:10px;height:12px;background:#000000;"></div>
<div style="left:129px;top:820px;width:12px;height:14px;background:#fff;"></div>
<div style="left:130px;top:821px;width:10px;height:12px;background:#000080;"></div>
<div style="left:246px;top:820px;width:12px;height:14px;background:#fff;"></div>
<div style="left:247px;top:821px;width:10px;height:12px;background:#008000;"></div>
<div style="left:404px;top:820px;width:12px;height:14px;background:#fff;"></div>
<div style="left:405px;top:821px;width:10px;height:12px;background:#00FF00;"></div>
<div style="left:480px;top:820px;width:12px;height:14px;background:#fff;"></div>
<div style="left:481px;top:821px;width:10px;height:12px;background:#0000FF;"></div>
<div style="left:7px;top:836px;width:1422px;height:1px;background:#808080;"></div>
<div style="left:1428px;top:817px;width:1px;height:20px;background:#A0A0A0;"></div>
<div style="left:6px;top:837px;width:1425px;height:2px;background:#FFFFFF;"></div>
<div style="left:6px;top:839px;width:1425px;height:1px;background:#E8E8E8;"></div>
<div style="left:6px;top:840px;width:1425px;height:21px;background:#F0F0F0;"></div>
<div style="left:1210px;top:841px;width:1px;height:19px;background:#D7D7D7;"></div>
<div style="left:1343px;top:841px;width:1px;height:19px;background:#D7D7D7;"></div>
<div style="left:1428px;top:841px;width:1px;height:19px;background:#D7D7D7;"></div>
<div style="left:5px;top:30px;width:1427px;height:1px;background:#5A96DC;"></div>
<div style="left:5px;top:862px;width:1427px;height:1px;background:#5A96DC;"></div>
<div style="left:5px;top:30px;width:1px;height:833px;background:#5A96DC;"></div>
<div style="left:1431px;top:30px;width:1px;height:833px;background:#5A96DC;"></div>
<div style="left:6px;top:31px;width:1425px;height:1px;background:#FBFDFF;"></div>
<div style="left:6px;top:861px;width:1425px;height:1px;background:#FBFDFF;"></div>
<div style="left:6px;top:31px;width:1px;height:831px;background:#FBFDFF;"></div>
<div style="left:1430px;top:31px;width:1px;height:831px;background:#FBFDFF;"></div>
<span class="t" style="left:645px;top:7px;font-size:15px;line-height:17px;color:#17202e;transform:translateX(0.81px) scaleX(0.9824);-webkit-text-stroke:0;">Управление дисками</span>
<span class="t" style="left:15px;top:35px;font-size:12px;line-height:14px;color:#000;transform:translateX(0.59px) scaleX(0.9922);">Файл</span>
<span class="t" style="left:61px;top:35px;font-size:12px;line-height:14px;color:#000;transform:translateX(0.07px) scaleX(0.9672);">Действие</span>
<span class="t" style="left:127px;top:35px;font-size:12px;line-height:14px;color:#000;transform:translateX(0.58px) scaleX(0.9274);">Вид</span>
<span class="t" style="left:163px;top:35px;font-size:12px;line-height:14px;color:#000;transform:translateX(0.97px) scaleX(0.9544);">Справка</span>
<span class="t" style="left:14px;top:88px;font-size:12px;line-height:14px;color:#000;transform:translateX(0.24px) scaleX(1.0858);">Том</span>
<span class="t" style="left:170px;top:88px;font-size:12px;line-height:14px;color:#000;transform:translateX(0.80px) scaleX(1.0104);">Расположение</span>
<span class="t" style="left:278px;top:88px;font-size:12px;line-height:14px;color:#000;transform:translateX(0.24px) scaleX(1.0295);">Тип</span>
<span class="t" style="left:383px;top:88px;font-size:12px;line-height:14px;color:#000;transform:translateX(0.01px) scaleX(0.9664);">Файловая система</span>
<span class="t" style="left:539px;top:88px;font-size:12px;line-height:14px;color:#000;transform:translateX(0.74px) scaleX(1.0003);">Состояние</span>
<span class="t" style="left:1062px;top:88px;font-size:12px;line-height:14px;color:#000;transform:translateX(0.84px) scaleX(0.9751);">Емкость</span>
<span class="t" style="left:1158px;top:88px;font-size:12px;line-height:14px;color:#000;transform:translateX(0.85px) scaleX(0.9895);">Свободно</span>
<span class="t" style="left:1248px;top:88px;font-size:12px;line-height:14px;color:#000;transform:translateX(0.06px) scaleX(0.9781);">Свободно %</span>
<span class="t" style="left:171px;top:106px;font-size:12px;line-height:14px;color:#000;transform:translateX(0.10px) scaleX(1.0236);">Простой</span>
<span class="t" style="left:278px;top:106px;font-size:12px;line-height:14px;color:#000;transform:translateX(0.04px) scaleX(0.9728);">Базовый</span>
<span class="t" style="left:539px;top:106px;font-size:12px;line-height:14px;color:#000;transform:translateX(0.82px) scaleX(0.9890);">Исправен (Основной раздел)</span>
<span class="t" style="left:1063px;top:106px;font-size:12px;line-height:14px;color:#000;transform:translateX(0.04px) scaleX(0.8964);">12,63 ГБ</span>
<span class="t" style="left:1159px;top:106px;font-size:12px;line-height:14px;color:#000;transform:translateX(0.04px) scaleX(0.8964);">12,63 ГБ</span>
<span class="t" style="left:1248px;top:106px;font-size:12px;line-height:14px;color:#000;transform:translateX(0.23px) scaleX(0.9101);">100 %</span>
<span class="t" style="left:27px;top:123px;font-size:12px;line-height:14px;color:#000;transform:translateX(0.82px) scaleX(0.9892);">BootMenu (K:)</span>
<span class="t" style="left:171px;top:123px;font-size:12px;line-height:14px;color:#000;transform:translateX(0.10px) scaleX(1.0236);">Простой</span>
<span class="t" style="left:278px;top:123px;font-size:12px;line-height:14px;color:#000;transform:translateX(0.04px) scaleX(0.9728);">Базовый</span>
<span class="t" style="left:383px;top:123px;font-size:12px;line-height:14px;color:#000;transform:translateX(0.03px) scaleX(0.8598);">CDFS</span>
<span class="t" style="left:539px;top:123px;font-size:12px;line-height:14px;color:#000;transform:translateX(0.82px) scaleX(0.9890);">Исправен (Основной раздел)</span>
<span class="t" style="left:1063px;top:123px;font-size:12px;line-height:14px;color:#000;transform:translateX(0.24px) scaleX(0.9280);">890 МБ</span>
<span class="t" style="left:1159px;top:123px;font-size:12px;line-height:14px;color:#000;transform:translateX(0.29px) scaleX(0.9556);">0 МБ</span>
<span class="t" style="left:1248px;top:123px;font-size:12px;line-height:14px;color:#000;transform:translateX(0.52px) scaleX(0.8999);">0 %</span>
<span class="t" style="left:27px;top:140px;font-size:12px;line-height:14px;color:#000;transform:translateX(0.84px) scaleX(0.9733);">DataRAIDmirror (N:)</span>
<span class="t" style="left:171px;top:140px;font-size:12px;line-height:14px;color:#000;transform:translateX(0.10px) scaleX(1.0236);">Простой</span>
<span class="t" style="left:278px;top:140px;font-size:12px;line-height:14px;color:#000;transform:translateX(0.04px) scaleX(0.9728);">Базовый</span>
<span class="t" style="left:382px;top:140px;font-size:12px;line-height:14px;color:#000;transform:translateX(0.80px) scaleX(0.9021);">NTFS</span>
<span class="t" style="left:539px;top:140px;font-size:12px;line-height:14px;color:#000;transform:translateX(0.83px) scaleX(0.9854);">Исправен (Активен, Основной раздел)</span>
<span class="t" style="left:1063px;top:140px;font-size:12px;line-height:14px;color:#000;transform:translateX(0.19px) scaleX(0.8891);">359,97 ГБ</span>
<span class="t" style="left:1159px;top:140px;font-size:12px;line-height:14px;color:#000;transform:translateX(0.24px) scaleX(0.8921);">77,86 ГБ</span>
<span class="t" style="left:1248px;top:140px;font-size:12px;line-height:14px;color:#000;transform:translateX(0.42px) scaleX(0.8963);">22 %</span>
<span class="t" style="left:27px;top:157px;font-size:12px;line-height:14px;color:#000;transform:translateX(0.80px) scaleX(1.0102);">MMedia&amp;Other (F:)</span>
<span class="t" style="left:171px;top:157px;font-size:12px;line-height:14px;color:#000;transform:translateX(0.10px) scaleX(1.0236);">Простой</span>
<span class="t" style="left:278px;top:157px;font-size:12px;line-height:14px;color:#000;transform:translateX(0.04px) scaleX(0.9728);">Базовый</span>
<span class="t" style="left:382px;top:157px;font-size:12px;line-height:14px;color:#000;transform:translateX(0.80px) scaleX(0.9021);">NTFS</span>
<span class="t" style="left:539px;top:157px;font-size:12px;line-height:14px;color:#000;transform:translateX(0.80px) scaleX(1.0151);">Исправен (Логический диск)</span>
<span class="t" style="left:1063px;top:157px;font-size:12px;line-height:14px;color:#000;transform:translateX(0.04px) scaleX(0.8919);">157,09 ГБ</span>
<span class="t" style="left:1159px;top:157px;font-size:12px;line-height:14px;color:#000;transform:translateX(0.04px) scaleX(0.8919);">103,18 ГБ</span>
<span class="t" style="left:1248px;top:157px;font-size:12px;line-height:14px;color:#000;transform:translateX(0.41px) scaleX(0.8967);">66 %</span>
<span class="t" style="left:27px;top:174px;font-size:12px;line-height:14px;color:#000;transform:translateX(0.89px) scaleX(0.9177);">RAMDISK (I:)</span>
<span class="t" style="left:171px;top:174px;font-size:12px;line-height:14px;color:#000;transform:translateX(0.10px) scaleX(1.0236);">Простой</span>
<span class="t" style="left:278px;top:174px;font-size:12px;line-height:14px;color:#000;transform:translateX(0.04px) scaleX(0.9728);">Базовый</span>
<span class="t" style="left:382px;top:174px;font-size:12px;line-height:14px;color:#000;transform:translateX(0.74px) scaleX(0.9724);">FAT32</span>
<span class="t" style="left:539px;top:174px;font-size:12px;line-height:14px;color:#000;transform:translateX(0.83px) scaleX(0.9854);">Исправен (Активен, Основной раздел)</span>
<span class="t" style="left:1063px;top:174px;font-size:12px;line-height:14px;color:#000;transform:translateX(0.19px) scaleX(0.8817);">3,99 ГБ</span>
<span class="t" style="left:1159px;top:174px;font-size:12px;line-height:14px;color:#000;transform:translateX(0.19px) scaleX(0.8817);">3,99 ГБ</span>
<span class="t" style="left:1248px;top:174px;font-size:12px;line-height:14px;color:#000;transform:translateX(0.23px) scaleX(0.9101);">100 %</span>
<span class="t" style="left:27px;top:191px;font-size:12px;line-height:14px;color:#000;transform:translateX(0.96px) scaleX(0.9283);">SystemXP (D:)</span>
<span class="t" style="left:171px;top:191px;font-size:12px;line-height:14px;color:#000;transform:translateX(0.10px) scaleX(1.0236);">Простой</span>
<span class="t" style="left:278px;top:191px;font-size:12px;line-height:14px;color:#000;transform:translateX(0.04px) scaleX(0.9728);">Базовый</span>
<span class="t" style="left:382px;top:191px;font-size:12px;line-height:14px;color:#000;transform:translateX(0.80px) scaleX(0.9021);">NTFS</span>
<span class="t" style="left:539px;top:191px;font-size:12px;line-height:14px;color:#000;transform:translateX(0.83px) scaleX(0.9798);">Исправен (Система, Активен, Основной раздел)</span>
<span class="t" style="left:1063px;top:191px;font-size:12px;line-height:14px;color:#000;transform:translateX(0.04px) scaleX(0.8919);">100,00 ГБ</span>
<span class="t" style="left:1159px;top:191px;font-size:12px;line-height:14px;color:#000;transform:translateX(0.83px) scaleX(0.8796);">45,49 ГБ</span>
<span class="t" style="left:1249px;top:191px;font-size:12px;line-height:14px;color:#000;transform:translateX(0.03px) scaleX(0.8738);">45 %</span>
<span class="t" style="left:27px;top:208px;font-size:12px;line-height:14px;color:#000;transform:translateX(0.98px) scaleX(0.9047);">SystemXP Stas (E:)</span>
<span class="t" style="left:171px;top:208px;font-size:12px;line-height:14px;color:#000;transform:translateX(0.10px) scaleX(1.0236);">Простой</span>
<span class="t" style="left:278px;top:208px;font-size:12px;line-height:14px;color:#000;transform:translateX(0.04px) scaleX(0.9728);">Базовый</span>
<span class="t" style="left:382px;top:208px;font-size:12px;line-height:14px;color:#000;transform:translateX(0.80px) scaleX(0.9021);">NTFS</span>
<span class="t" style="left:539px;top:208px;font-size:12px;line-height:14px;color:#000;transform:translateX(0.80px) scaleX(1.0151);">Исправен (Логический диск)</span>
<span class="t" style="left:1063px;top:208px;font-size:12px;line-height:14px;color:#000;transform:translateX(0.22px) scaleX(0.8925);">29,97 ГБ</span>
<span class="t" style="left:1159px;top:208px;font-size:12px;line-height:14px;color:#000;transform:translateX(0.04px) scaleX(0.8964);">15,37 ГБ</span>
<span class="t" style="left:1248px;top:208px;font-size:12px;line-height:14px;color:#000;transform:translateX(0.34px) scaleX(0.8991);">51 %</span>
<span class="t" style="left:27px;top:225px;font-size:12px;line-height:14px;color:#000;transform:translateX(0.96px) scaleX(0.9284);">SystemXP Vlad (G:)</span>
<span class="t" style="left:171px;top:225px;font-size:12px;line-height:14px;color:#000;transform:translateX(0.10px) scaleX(1.0236);">Простой</span>
<span class="t" style="left:278px;top:225px;font-size:12px;line-height:14px;color:#000;transform:translateX(0.04px) scaleX(0.9728);">Базовый</span>
<span class="t" style="left:382px;top:225px;font-size:12px;line-height:14px;color:#000;transform:translateX(0.80px) scaleX(0.9021);">NTFS</span>
<span class="t" style="left:539px;top:225px;font-size:12px;line-height:14px;color:#000;transform:translateX(0.82px) scaleX(0.9890);">Исправен (Основной раздел)</span>
<span class="t" style="left:1063px;top:225px;font-size:12px;line-height:14px;color:#000;transform:translateX(0.22px) scaleX(0.8925);">29,97 ГБ</span>
<span class="t" style="left:1159px;top:225px;font-size:12px;line-height:14px;color:#000;transform:translateX(0.24px) scaleX(0.8805);">7,58 ГБ</span>
<span class="t" style="left:1248px;top:225px;font-size:12px;line-height:14px;color:#000;transform:translateX(0.42px) scaleX(0.8963);">25 %</span>
<span class="t" style="left:27px;top:242px;font-size:12px;line-height:14px;color:#000;transform:translateX(0.96px) scaleX(0.9280);">SysXPsp3clean (H:)</span>
<span class="t" style="left:171px;top:242px;font-size:12px;line-height:14px;color:#000;transform:translateX(0.10px) scaleX(1.0236);">Простой</span>
<span class="t" style="left:278px;top:242px;font-size:12px;line-height:14px;color:#000;transform:translateX(0.04px) scaleX(0.9728);">Базовый</span>
<span class="t" style="left:382px;top:242px;font-size:12px;line-height:14px;color:#000;transform:translateX(0.80px) scaleX(0.9021);">NTFS</span>
<span class="t" style="left:539px;top:242px;font-size:12px;line-height:14px;color:#000;transform:translateX(0.82px) scaleX(0.9890);">Исправен (Основной раздел)</span>
<span class="t" style="left:1063px;top:242px;font-size:12px;line-height:14px;color:#000;transform:translateX(0.04px) scaleX(0.8877);">1545,97 ГБ</span>
<span class="t" style="left:1159px;top:242px;font-size:12px;line-height:14px;color:#000;transform:translateX(0.04px) scaleX(0.8877);">1524,41 ГБ</span>
<span class="t" style="left:1248px;top:242px;font-size:12px;line-height:14px;color:#000;transform:translateX(0.41px) scaleX(0.8967);">99 %</span>
<span class="t" style="left:28px;top:259px;font-size:12px;line-height:14px;color:#000;transform:translateX(0.76px) scaleX(0.9695);">Windows 8 (C:)</span>
<span class="t" style="left:171px;top:259px;font-size:12px;line-height:14px;color:#000;transform:translateX(0.10px) scaleX(1.0236);">Простой</span>
<span class="t" style="left:278px;top:259px;font-size:12px;line-height:14px;color:#000;transform:translateX(0.04px) scaleX(0.9728);">Базовый</span>
<span class="t" style="left:382px;top:259px;font-size:12px;line-height:14px;color:#000;transform:translateX(0.80px) scaleX(0.9021);">NTFS</span>
<span class="t" style="left:539px;top:259px;font-size:12px;line-height:14px;color:#000;transform:translateX(0.82px) scaleX(0.9905);">Исправен (Загрузка, Файл подкачки, Активен, Аварийный дамп памяти, Основной раздел)</span>
<span class="t" style="left:1063px;top:259px;font-size:12px;line-height:14px;color:#000;transform:translateX(0.01px) scaleX(0.9250);">111,79 ГБ</span>
<span class="t" style="left:1159px;top:259px;font-size:12px;line-height:14px;color:#000;transform:translateX(0.27px) scaleX(0.8915);">87,35 ГБ</span>
<span class="t" style="left:1248px;top:259px;font-size:12px;line-height:14px;color:#000;transform:translateX(0.43px) scaleX(0.8956);">78 %</span>
<span class="t" style="left:35px;top:315px;font-size:12px;line-height:14px;color:#000;transform:translateX(0.37px) scaleX(1.0245);font-weight:bold;">Диск 0</span>
<span class="t" style="left:17px;top:330px;font-size:12px;line-height:14px;color:#000;transform:translateX(0.14px) scaleX(0.9728);">Базовый</span>
<span class="t" style="left:17px;top:345px;font-size:12px;line-height:14px;color:#000;transform:translateX(0.45px) scaleX(0.8860);">1863,02 ГБ</span>
<span class="t" style="left:17px;top:360px;font-size:12px;line-height:14px;color:#000;transform:translateX(0.16px) scaleX(0.9466);">В сети</span>
<div class="c" style="left:117px;top:332px;width:237px;height:14px"><span class="t" style="left:2px;top:0px;font-size:12px;line-height:14px;color:#000;transform:translateX(0.41px) scaleX(0.9629);font-weight:bold;">SystemXP  (D:)</span></div>
<div class="c" style="left:117px;top:347px;width:237px;height:14px"><span class="t" style="left:3px;top:0px;font-size:12px;line-height:14px;color:#000;transform:translateX(0.13px) scaleX(0.9013);">100,00 ГБ NTFS</span></div>
<div class="c" style="left:117px;top:362px;width:237px;height:14px"><span class="t" style="left:2px;top:0px;font-size:12px;line-height:14px;color:#000;transform:translateX(0.88px) scaleX(0.9798);">Исправен (Система, Активен, Основной раздел)</span></div>
<div class="c" style="left:366px;top:332px;width:211px;height:14px"><span class="t" style="left:2px;top:0px;font-size:12px;line-height:14px;color:#000;transform:translateX(0.42px) scaleX(0.9492);font-weight:bold;">SystemXP Vlad  (G:)</span></div>
<div class="c" style="left:366px;top:347px;width:211px;height:14px"><span class="t" style="left:2px;top:0px;font-size:12px;line-height:14px;color:#000;transform:translateX(0.91px) scaleX(0.9007);">29,97 ГБ NTFS</span></div>
<div class="c" style="left:366px;top:362px;width:211px;height:14px"><span class="t" style="left:2px;top:0px;font-size:12px;line-height:14px;color:#000;transform:translateX(0.87px) scaleX(0.9890);">Исправен (Основной раздел)</span></div>
<div class="c" style="left:593px;top:332px;width:207px;height:14px"><span class="t" style="left:2px;top:0px;font-size:12px;line-height:14px;color:#000;transform:translateX(0.44px) scaleX(0.9224);font-weight:bold;">SystemXP Stas  (E:)</span></div>
<div class="c" style="left:593px;top:347px;width:207px;height:14px"><span class="t" style="left:2px;top:0px;font-size:12px;line-height:14px;color:#000;transform:translateX(0.91px) scaleX(0.9007);">29,97 ГБ NTFS</span></div>
<div class="c" style="left:593px;top:362px;width:207px;height:14px"><span class="t" style="left:2px;top:0px;font-size:12px;line-height:14px;color:#000;transform:translateX(0.85px) scaleX(1.0157);">Исправен (Логический диск)</span></div>
<div class="c" style="left:812px;top:332px;width:243px;height:14px"><span class="t" style="left:2px;top:0px;font-size:12px;line-height:14px;color:#000;transform:translateX(0.73px) scaleX(1.0001);font-weight:bold;">MMedia&amp;Other  (F:)</span></div>
<div class="c" style="left:812px;top:347px;width:243px;height:14px"><span class="t" style="left:3px;top:0px;font-size:12px;line-height:14px;color:#000;transform:translateX(0.13px) scaleX(0.9013);">157,09 ГБ NTFS</span></div>
<div class="c" style="left:812px;top:362px;width:243px;height:14px"><span class="t" style="left:2px;top:0px;font-size:12px;line-height:14px;color:#000;transform:translateX(0.85px) scaleX(1.0157);">Исправен (Логический диск)</span></div>
<div class="c" style="left:1071px;top:332px;width:296px;height:14px"><span class="t" style="left:2px;top:0px;font-size:12px;line-height:14px;color:#000;transform:translateX(0.44px) scaleX(0.9212);font-weight:bold;">SysXPsp3clean  (H:)</span></div>
<div class="c" style="left:1071px;top:347px;width:296px;height:14px"><span class="t" style="left:3px;top:0px;font-size:12px;line-height:14px;color:#000;transform:translateX(0.13px) scaleX(0.9000);">1545,97 ГБ NTFS</span></div>
<div class="c" style="left:1071px;top:362px;width:296px;height:14px"><span class="t" style="left:2px;top:0px;font-size:12px;line-height:14px;color:#000;transform:translateX(0.87px) scaleX(0.9890);">Исправен (Основной раздел)</span></div>
<div class="c" style="left:1379px;top:347px;width:41px;height:14px"><span class="t" style="left:2px;top:0px;font-size:12px;line-height:14px;color:#000;transform:translateX(0.86px) scaleX(0.9603);">9 МБ</span></div>
<div class="c" style="left:1379px;top:362px;width:41px;height:14px"><span class="t" style="left:2px;top:0px;font-size:12px;line-height:14px;color:#000;transform:translateX(0.88px) scaleX(0.9832);">Не распределен</span></div>
<span class="t" style="left:35px;top:414px;font-size:12px;line-height:14px;color:#000;transform:translateX(0.37px) scaleX(1.0101);font-weight:bold;">Диск 1</span>
<span class="t" style="left:17px;top:429px;font-size:12px;line-height:14px;color:#000;transform:translateX(0.14px) scaleX(0.9728);">Базовый</span>
<span class="t" style="left:17px;top:444px;font-size:12px;line-height:14px;color:#000;transform:translateX(0.42px) scaleX(0.9162);">111,79 ГБ</span>
<span class="t" style="left:17px;top:459px;font-size:12px;line-height:14px;color:#000;transform:translateX(0.16px) scaleX(0.9466);">В сети</span>
<div class="c" style="left:117px;top:431px;width:1047px;height:14px"><span class="t" style="left:3px;top:0px;font-size:12px;line-height:14px;color:#000;transform:translateX(0.36px) scaleX(0.9350);font-weight:bold;">Windows 8  (C:)</span></div>
<div class="c" style="left:117px;top:446px;width:1047px;height:14px"><span class="t" style="left:3px;top:0px;font-size:12px;line-height:14px;color:#000;transform:translateX(0.12px) scaleX(0.9120);">111,79 ГБ NTFS</span></div>
<div class="c" style="left:117px;top:461px;width:1047px;height:14px"><span class="t" style="left:2px;top:0px;font-size:12px;line-height:14px;color:#000;transform:translateX(0.87px) scaleX(0.9911);">Исправен (Загрузка, Файл подкачки, Активен, Аварийный дамп памяти, Основной раздел)</span></div>
<span class="t" style="left:35px;top:513px;font-size:12px;line-height:14px;color:#000;transform:translateX(0.37px) scaleX(1.0238);font-weight:bold;">Диск 2</span>
<span class="t" style="left:17px;top:528px;font-size:12px;line-height:14px;color:#000;transform:translateX(0.14px) scaleX(0.9728);">Базовый</span>
<span class="t" style="left:17px;top:543px;font-size:12px;line-height:14px;color:#000;transform:translateX(0.59px) scaleX(0.8882);">372,61 ГБ</span>
<span class="t" style="left:17px;top:558px;font-size:12px;line-height:14px;color:#000;transform:translateX(0.16px) scaleX(0.9466);">В сети</span>
<div class="c" style="left:117px;top:530px;width:599px;height:14px"><span class="t" style="left:3px;top:0px;font-size:12px;line-height:14px;color:#000;transform:translateX(0.04px) scaleX(0.9881);font-weight:bold;">DataRAIDmirror  (N:)</span></div>
<div class="c" style="left:117px;top:545px;width:599px;height:14px"><span class="t" style="left:2px;top:0px;font-size:12px;line-height:14px;color:#000;transform:translateX(0.88px) scaleX(0.9019);">359,97 ГБ NTFS</span></div>
<div class="c" style="left:117px;top:560px;width:599px;height:14px"><span class="t" style="left:2px;top:0px;font-size:12px;line-height:14px;color:#000;transform:translateX(0.88px) scaleX(0.9854);">Исправен (Активен, Основной раздел)</span></div>
<div class="c" style="left:728px;top:545px;width:439px;height:14px"><span class="t" style="left:3px;top:0px;font-size:12px;line-height:14px;color:#000;transform:translateX(0.14px) scaleX(0.8964);">12,63 ГБ</span></div>
<div class="c" style="left:728px;top:560px;width:439px;height:14px"><span class="t" style="left:2px;top:0px;font-size:12px;line-height:14px;color:#000;transform:translateX(0.87px) scaleX(0.9890);">Исправен (Основной раздел)</span></div>
<div class="c" style="left:1179px;top:545px;width:94px;height:14px"><span class="t" style="left:2px;top:0px;font-size:12px;line-height:14px;color:#000;transform:translateX(0.93px) scaleX(0.9580);">8 МБ</span></div>
<div class="c" style="left:1179px;top:560px;width:94px;height:14px"><span class="t" style="left:2px;top:0px;font-size:12px;line-height:14px;color:#000;transform:translateX(0.88px) scaleX(0.9832);">Не распределен</span></div>
<span class="t" style="left:35px;top:612px;font-size:12px;line-height:14px;color:#000;transform:translateX(0.37px) scaleX(1.0238);font-weight:bold;">Диск 3</span>
<span class="t" style="left:17px;top:627px;font-size:12px;line-height:14px;color:#000;transform:translateX(0.14px) scaleX(0.9728);">Базовый</span>
<span class="t" style="left:18px;top:642px;font-size:12px;line-height:14px;color:#000;transform:translateX(0.23px) scaleX(0.8650);">4,00 ГБ</span>
<span class="t" style="left:17px;top:657px;font-size:12px;line-height:14px;color:#000;transform:translateX(0.16px) scaleX(0.9466);">В сети</span>
<div class="c" style="left:117px;top:629px;width:744px;height:14px"><span class="t" style="left:3px;top:0px;font-size:12px;line-height:14px;color:#000;transform:translateX(0.05px) scaleX(0.9702);font-weight:bold;">RAMDISK  (I:)</span></div>
<div class="c" style="left:117px;top:644px;width:744px;height:14px"><span class="t" style="left:3px;top:0px;font-size:12px;line-height:14px;color:#000;transform:translateX(0.53px) scaleX(0.9152);">4,00 ГБ FAT32</span></div>
<div class="c" style="left:117px;top:659px;width:744px;height:14px"><span class="t" style="left:2px;top:0px;font-size:12px;line-height:14px;color:#000;transform:translateX(0.88px) scaleX(0.9854);">Исправен (Активен, Основной раздел)</span></div>
<span class="t" style="left:34px;top:711px;font-size:12px;line-height:14px;color:#000;transform:translateX(0.78px) scaleX(0.9760);font-weight:bold;">CD-ROM 0</span>
<span class="t" style="left:17px;top:726px;font-size:12px;line-height:14px;color:#000;transform:translateX(0.20px) scaleX(0.9002);">DVD</span>
<span class="t" style="left:17px;top:741px;font-size:12px;line-height:14px;color:#000;transform:translateX(0.64px) scaleX(0.9280);">890 МБ</span>
<span class="t" style="left:17px;top:756px;font-size:12px;line-height:14px;color:#000;transform:translateX(0.16px) scaleX(0.9466);">В сети</span>
<div class="c" style="left:117px;top:728px;width:605px;height:14px"><span class="t" style="left:3px;top:0px;font-size:12px;line-height:14px;color:#000;transform:translateX(0.06px) scaleX(0.9647);font-weight:bold;">BootMenu  (K:)</span></div>
<div class="c" style="left:117px;top:743px;width:605px;height:14px"><span class="t" style="left:2px;top:0px;font-size:12px;line-height:14px;color:#000;transform:translateX(0.96px) scaleX(0.8961);">890 МБ CDFS</span></div>
<div class="c" style="left:117px;top:758px;width:605px;height:14px"><span class="t" style="left:2px;top:0px;font-size:12px;line-height:14px;color:#000;transform:translateX(0.87px) scaleX(0.9890);">Исправен (Основной раздел)</span></div>
<span class="t" style="left:29px;top:820px;font-size:12px;line-height:14px;color:#000;transform:translateX(0.15px) scaleX(0.9610);">Не распределена</span>
<span class="t" style="left:145px;top:820px;font-size:12px;line-height:14px;color:#000;transform:translateX(0.40px) scaleX(0.9866);">Основной раздел</span>
<span class="t" style="left:263px;top:820px;font-size:12px;line-height:14px;color:#000;transform:translateX(0.07px) scaleX(0.9871);">Дополнительный раздел</span>
<span class="t" style="left:420px;top:820px;font-size:12px;line-height:14px;color:#000;transform:translateX(0.35px) scaleX(0.9822);">Свободно</span>
<span class="t" style="left:497px;top:820px;font-size:12px;line-height:14px;color:#000;transform:translateX(0.07px) scaleX(1.0071);">Логический диск</span>
</div></body></html>
